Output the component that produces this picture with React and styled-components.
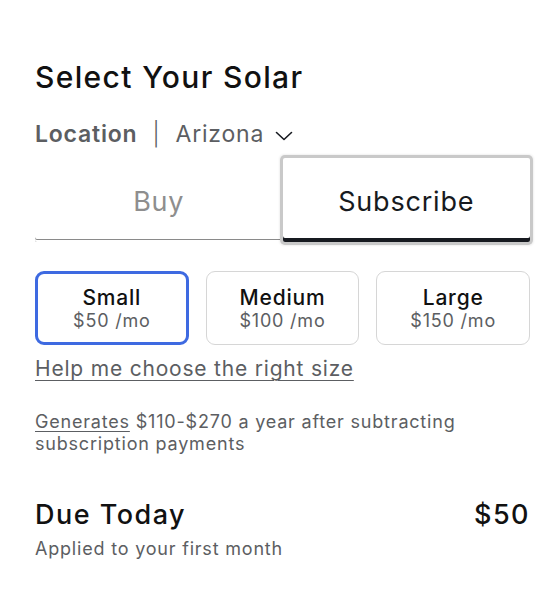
import React, { useState } from 'react';
import styled, { createGlobalStyle } from 'styled-components';

const GlobalStyle = createGlobalStyle`
  body {
    margin: 0;
    background: #fff;
    font-family: "Inter", "Liberation Sans", sans-serif;
    letter-spacing: 0.05em;
    color: #171a20;
  }
`;

const Page = styled.div`
  width: 495px;
  padding: 59px 30px 0 35px;
`;

const Title = styled.h1`
  margin: 0;
  font-size: 30px;
  font-weight: 500;
  line-height: 36px;
  letter-spacing: 0.045em;
  color: #111;
`;

const LocationRow = styled.div`
  display: flex;
  align-items: center;
  margin-top: 25px;
  font-size: 23px;
  line-height: 28px;
  color: #5c5e62;
`;

const LocationLabel = styled.span`
  font-weight: 600;
`;

const Divider = styled.span`
  margin: 0 15px;
  font-weight: 300;
`;

const Chevron = styled.svg`
  width: 20px;
  height: 20px;
  margin-left: 10px;
  margin-top: 3px;
`;

const Tabs = styled.div`
  display: grid;
  grid-template-columns: 1fr 1fr;
  margin-top: 10px;
`;

const Tab = styled.button`
  height: 84px;
  border: none;
  border-radius: 2px;
  background: #fff;
  font-family: inherit;
  letter-spacing: inherit;
  font-size: 27px;
  font-weight: 400;
  padding: 3px 0 0;
  cursor: pointer;
  color: ${p => (p.$active ? '#171a20' : '#8e8e8e')};
  box-shadow: ${p =>
    p.$active
      ? 'inset 0 -4px 0 #171a20, 0 0 0 3px #c9c9c9, 0 0 2px 4px rgba(0,0,0,0.06)'
      : 'inset 0 -2px 0 #fff, inset 0 -3px 0 #8a8a8a'};
`;

const Sizes = styled.div`
  display: grid;
  grid-template-columns: repeat(3, 1fr);
  gap: 17px;
  margin-top: 29px;
`;

const SizeCard = styled.button`
  height: 74px;
  border-radius: 9px;
  background: #fff;
  font-family: inherit;
  letter-spacing: inherit;
  border: ${p => (p.$selected ? '3px solid #3e6ae1' : '1px solid #d6d6d6')};
  padding: 2px 0 0;
  display: flex;
  flex-direction: column;
  align-items: center;
  justify-content: center;
  cursor: pointer;
`;

const SizeName = styled.span`
  font-size: 21px;
  font-weight: 500;
  line-height: 24px;
  color: #111;
`;

const SizePrice = styled.span`
  font-size: 18px;
  line-height: 22px;
  color: #5c5e62;
`;

const HelpLink = styled.a`
  display: inline-block;
  margin-top: 12px;
  font-size: 21px;
  line-height: 24px;
  color: #5c5e62;
  text-decoration: underline;
  text-underline-offset: 4px;
  text-decoration-thickness: 1px;
`;

const Note = styled.p`
  margin: 30px 0 0;
  font-size: 18px;
  line-height: 22px;
  color: #5c5e62;
  max-width: 440px;
`;

const NoteLink = styled.a`
  color: inherit;
  text-decoration: underline;
  text-underline-offset: 3px;
`;

const DueRow = styled.div`
  display: flex;
  justify-content: space-between;
  align-items: baseline;
  margin-top: 44px;
  font-size: 27px;
  font-weight: 500;
  line-height: 32px;
  letter-spacing: 0.055em;
  color: #111;
`;

const DueSub = styled.div`
  margin-top: 7px;
  font-size: 18px;
  line-height: 22px;
  color: #5c5e62;
`;

const sizes = [
  { name: 'Small', price: '$50 /mo' },
  { name: 'Medium', price: '$100 /mo' },
  { name: 'Large', price: '$150 /mo' },
];

export default function App() {
  const [tab, setTab] = useState('subscribe');
  const [size, setSize] = useState('Small');

  return (
    <>
      <GlobalStyle />
      <Page>
        <Title>Select Your Solar</Title>
        <LocationRow>
          <LocationLabel>Location</LocationLabel>
          <Divider>|</Divider>
          <span>Arizona</span>
          <Chevron viewBox="0 0 20 20" fill="none" stroke="#171a20" strokeWidth="1.6" strokeLinecap="round" strokeLinejoin="round">
            <path d="M2.5 6.5l7.5 7 7.5-7" />
          </Chevron>
        </LocationRow>
        <Tabs>
          <Tab $active={tab === 'buy'} onClick={() => setTab('buy')}>Buy</Tab>
          <Tab $active={tab === 'subscribe'} onClick={() => setTab('subscribe')}>Subscribe</Tab>
        </Tabs>
        <Sizes>
          {sizes.map(s => (
            <SizeCard key={s.name} $selected={size === s.name} onClick={() => setSize(s.name)}>
              <SizeName>{s.name}</SizeName>
              <SizePrice>{s.price}</SizePrice>
            </SizeCard>
          ))}
        </Sizes>
        <HelpLink href="#">Help me choose the right size</HelpLink>
        <Note>
          <NoteLink href="#">Generates</NoteLink> $110-$270 a year after subtracting subscription payments
        </Note>
        <DueRow>
          <span>Due Today</span>
          <span>$50</span>
        </DueRow>
        <DueSub>Applied to your first month</DueSub>
      </Page>
    </>
  );
}
